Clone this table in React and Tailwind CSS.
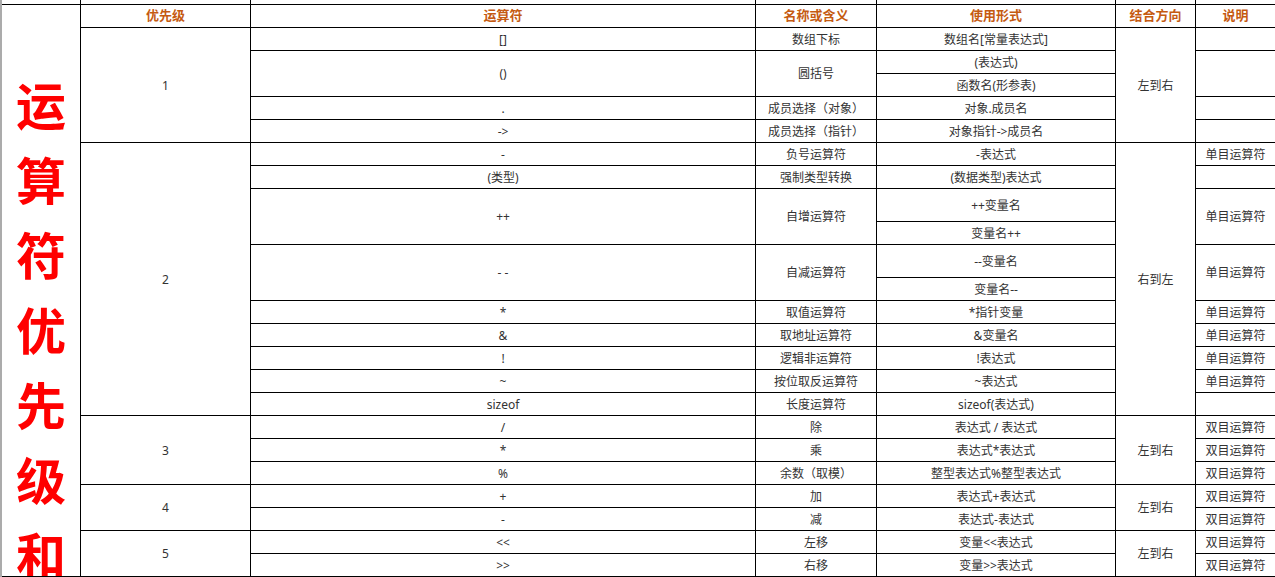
import React from "react";

const TITLE = "运算符优先级和";

const HEAD = ["优先级", "运算符", "名称或含义", "使用形式", "结合方向", "说明"];

// cells listed row by row, like a table; span = how many grid rows the cell covers
const BODY = [
  // priority 1
  { t: "1", span: "row-span-5" },
  { t: "[]" },
  { t: "数组下标" },
  { t: "数组名[常量表达式]" },
  { t: "左到右", span: "row-span-5" },
  { t: "" },

  { t: "()", span: "row-span-2" },
  { t: "圆括号", span: "row-span-2" },
  { t: "(表达式)" },
  { t: "", span: "row-span-2" },
  { t: "函数名(形参表)" },

  { t: "." },
  { t: "成员选择（对象）" },
  { t: "对象.成员名" },
  { t: "" },

  { t: "->" },
  { t: "成员选择（指针）" },
  { t: "对象指针->成员名" },
  { t: "" },

  // priority 2
  { t: "2", span: "row-span-11" },
  { t: "-" },
  { t: "负号运算符" },
  { t: "-表达式" },
  { t: "右到左", span: "row-span-11" },
  { t: "单目运算符" },

  { t: "(类型)" },
  { t: "强制类型转换" },
  { t: "(数据类型)表达式" },
  { t: "" },

  { t: "++", span: "row-span-2" },
  { t: "自增运算符", span: "row-span-2" },
  { t: "++变量名" },
  { t: "单目运算符", span: "row-span-2" },
  { t: "变量名++" },

  { t: "- -", span: "row-span-2" },
  { t: "自减运算符", span: "row-span-2" },
  { t: "--变量名" },
  { t: "单目运算符", span: "row-span-2" },
  { t: "变量名--" },

  { t: "*" },
  { t: "取值运算符" },
  { t: "*指针变量" },
  { t: "单目运算符" },

  { t: "&" },
  { t: "取地址运算符" },
  { t: "&变量名" },
  { t: "单目运算符" },

  { t: "!" },
  { t: "逻辑非运算符" },
  { t: "!表达式" },
  { t: "单目运算符" },

  { t: "~" },
  { t: "按位取反运算符" },
  { t: "~表达式" },
  { t: "单目运算符" },

  { t: "sizeof" },
  { t: "长度运算符" },
  { t: "sizeof(表达式)" },
  { t: "" },

  // priority 3
  { t: "3", span: "row-span-3" },
  { t: "/" },
  { t: "除" },
  { t: "表达式 / 表达式" },
  { t: "左到右", span: "row-span-3" },
  { t: "双目运算符" },

  { t: "*" },
  { t: "乘" },
  { t: "表达式*表达式" },
  { t: "双目运算符" },

  { t: "%" },
  { t: "余数（取模）" },
  { t: "整型表达式%整型表达式" },
  { t: "双目运算符" },

  // priority 4
  { t: "4", span: "row-span-2" },
  { t: "+" },
  { t: "加" },
  { t: "表达式+表达式" },
  { t: "左到右", span: "row-span-2" },
  { t: "双目运算符" },

  { t: "-" },
  { t: "减" },
  { t: "表达式-表达式" },
  { t: "双目运算符" },

  // priority 5
  { t: "5", span: "row-span-2" },
  { t: "<<" },
  { t: "左移" },
  { t: "变量<<表达式" },
  { t: "左到右", span: "row-span-2" },
  { t: "双目运算符" },

  { t: ">>" },
  { t: "右移" },
  { t: "变量>>表达式" },
  { t: "双目运算符" },
];

const App = () => {
  return (
    <div className="w-[1275px] h-[577px] overflow-hidden bg-white border-l-2 border-[#ababab] font-['Noto_Sans','Noto_Sans_CJK_SC',sans-serif] text-[12px] text-[#333]">
      <div className="grid gap-px bg-black border-b border-black grid-cols-[78px_169px_504px_120px_238px_79px_1fr] grid-rows-[4px_repeat(8,22px)_32px_22px_32px_repeat(13,22px)]">
        {/* cut-off row from above */}
        {[0, 1, 2, 3, 4, 5, 6].map((i) => (
          <div key={"top" + i} className="bg-white" />
        ))}

        {/* big red title running down the first column */}
        <div className="row-span-24 bg-white overflow-hidden flex flex-col items-center pt-[61px] text-[50px] leading-[75px] font-bold text-[#ff0000] font-['Noto_Sans_CJK_SC',sans-serif]">
          {TITLE.split("").map((ch, i) => (
            <span key={i}>{ch}</span>
          ))}
        </div>

        {/* header */}
        {HEAD.map((h) => (
          <div key={h} className="bg-white flex items-center justify-center font-bold text-[13px] text-[#c55a11]">
            {h}
          </div>
        ))}

        {BODY.map((c, i) => (
          <div key={i} className={`bg-white flex items-center justify-center whitespace-nowrap pt-px ${c.span || ""}`}>
            {c.t}
          </div>
        ))}
      </div>
    </div>
  );
};

export default App;
